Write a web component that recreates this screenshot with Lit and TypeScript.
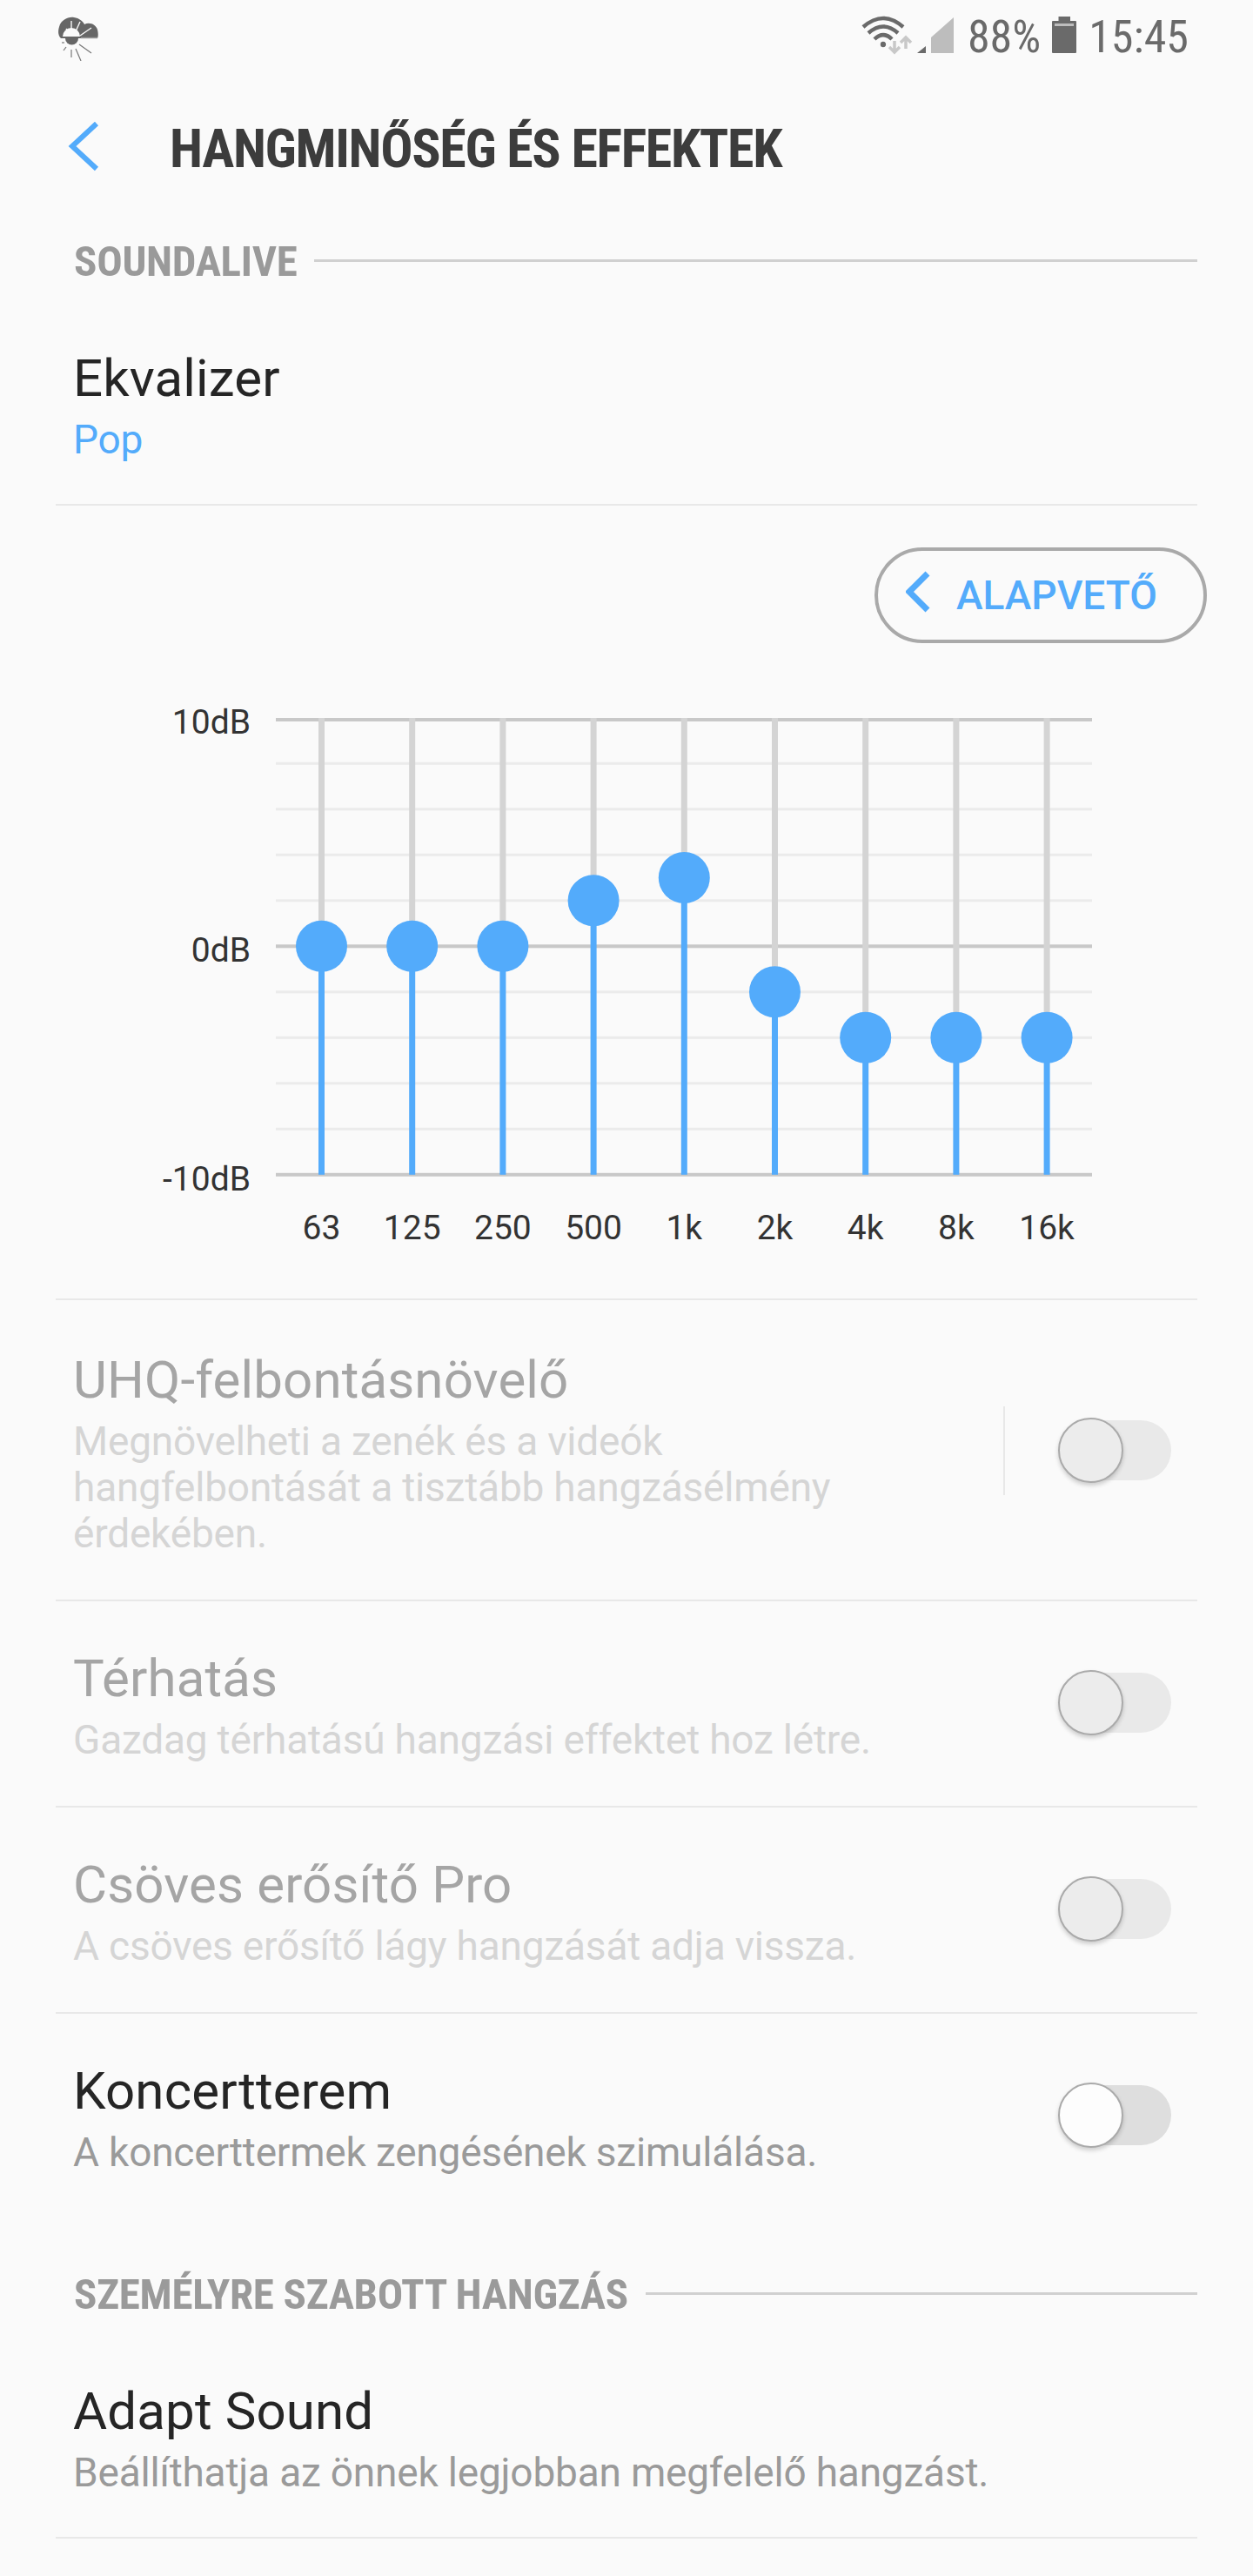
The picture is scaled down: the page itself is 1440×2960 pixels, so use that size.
import { LitElement, html, css, svg } from "lit";
import { customElement } from "lit/decorators.js";

const BARS: [string, number][] = [
  ["63", 0], ["125", 0], ["250", 0], ["500", 1], ["1k", 1.5], ["2k", -1], ["4k", -2], ["8k", -2], ["16k", -2],
];
const TOP = 827, FIRST = 877.3, STEP = 52.5, X0 = 369.5, DX = 104.2;

@customElement("app-root")
export class AppRoot extends LitElement {
  static styles = css`
    :host { display: block; width: 1440px; height: 2960px; background: #fafafa; font-family: Roboto, sans-serif; overflow: hidden; }
    .status { height: 80px; display: flex; align-items: flex-start; color: #6a6a6a; }
    .status .cloud { margin: 10px 0 0 55px; }
    .status .net { margin: 10px 0 0 auto; }
    .status .pct, .status .time { font-size: 52px; line-height: 60px; font-stretch: 80%; }
    .status .pct { margin: 13px 0 0 11px; font-stretch: 82%; }
    .status .batt { margin: 10px 0 0 12px; }
    .status .time { margin: 13px 74px 0 13px; }
    .header { height: 191px; display: flex; align-items: flex-start; }
    .header .back { margin: 60px 0 0 78px; }
    .header h1 { margin: 51px 0 0 0; padding-left: 81px; font-size: 62px; line-height: 80px; font-weight: 700; color: #3c3c3c; font-stretch: 75%; letter-spacing: -1.35px; white-space: nowrap; }
    .section { display: flex; align-items: center; height: 60px; margin: 0 64px 0 85px; gap: 20px; }
    .section span { font-size: 49px; line-height: 60px; font-weight: 700; color: #9a9a9a; font-stretch: 75%; letter-spacing: -0.3px; white-space: nowrap; }
    .section i { flex: 1; height: 3px; background: #d0d0d0; margin-bottom: 4px; }
    .row { display: flex; align-items: center; margin: 0 64px; padding: 59px 0 49px 20px; border-bottom: 2px solid #e8e8e8; }
    .row.first { padding: 74px 0 47px 20px; }
    .row.plain { border-bottom: none; margin-bottom: 58px; }
    .text { flex: 1; min-width: 0; }
    .title { font-size: 60px; line-height: 60px; letter-spacing: 0.15px; color: #252525; margin-bottom: 14px; }
    .sub { font-size: 46px; line-height: 53px; letter-spacing: -0.2px; color: #9a9a9a; }
    .sub.blue { color: #53abfb; }
    .row.off .title { color: #a5a5a5; }
    .row.off .sub { color: #d5d5d5; }
    .vsep { width: 2px; height: 102px; background: #e8e8e8; margin: 0 61px 12px 0; }
    .toggle { position: relative; width: 130px; height: 75px; margin: 0 30px 12px 0; flex: none; }
    .track { position: absolute; left: 3px; right: 0; top: 3px; height: 69px; border-radius: 35px; background: #dedede; }
    .thumb { position: absolute; left: 0; top: 0; width: 75px; height: 75px; box-sizing: border-box; border-radius: 50%; background: #fdfdfd; border: 2px solid #aaaaaa; box-shadow: 0 3px 5px rgba(0,0,0,.18); }
    .row.off .track { background: #e9e9e9; }
    .row.off .thumb { background: #ececec; }
    .pillrow { display: flex; justify-content: flex-end; padding: 48px 53px 0 0; }
    .pill { box-sizing: border-box; width: 382px; height: 110px; border: 4px solid #a9a9a9; border-radius: 55px; display: flex; align-items: center; color: #53abfb; padding-left: 32px; }
    .pill svg { margin-bottom: 6px; }
    .pill b { font-size: 46px; font-weight: 500; line-height: 60px; margin-left: 30px; white-space: nowrap; }
    .chart { display: block; margin-top: 51px; font-family: Roboto, sans-serif; }
    .chart text { font-size: 39px; fill: #333333; }
    .chart .end { text-anchor: end; }
    .chart .mid { text-anchor: middle; }
    .rule { height: 2px; margin: 52px 64px 3px; background: #e8e8e8; }
  `;

  private row(title: unknown, sub: unknown, opts: { off?: boolean; sep?: boolean; plain?: boolean } = {}) {
    const cls = `row ${opts.off ? "off" : ""} ${opts.plain ? "plain" : ""}`;
    return html`<div class=${cls}>
      <div class="text"><div class="title">${title}</div><div class="sub">${sub}</div></div>
      ${opts.sep ? html`<div class="vsep"></div>` : ""}
      <div class="toggle"><div class="track"></div><div class="thumb"></div></div>
    </div>`;
  }

  private chart() {
    const ys = Array.from({ length: 11 }, (_, i) => (i === 0 ? TOP : FIRST + (i - 1) * STEP));
    const bottom = ys[10];
    const mid = ys[5];
    return html`<svg class="chart" width="1440" height="650" viewBox="0 790 1440 650">
      ${ys.map((y, i) => {
        const major = i === 0 || i === 5 || i === 10;
        return svg`<rect x="317" y=${y - (major ? 2 : 1.5)} width="938" height=${major ? 4 : 3} fill=${major ? "#c8c8c8" : "#ebebeb"}></rect>`;
      })}
      <text class="end" x="288" y="843">10dB</text>
      <text class="end" x="288" y="1105">0dB</text>
      <text class="end" x="288" y="1368">-10dB</text>
      ${BARS.map(([label, v], i) => {
        const x = X0 + i * DX;
        const y = mid - v * STEP;
        return svg`
          <rect x=${x - 3.5} y=${TOP - 2} width="7" height=${y - TOP + 2} fill="#d4d4d4"></rect>
          <rect x=${x - 3.5} y=${y} width="7" height=${bottom - y} fill="#53abfb"></rect>
          <circle cx=${x} cy=${y} r="29.5" fill="#53abfb"></circle>
          <text class="mid" x=${x} y="1424">${label}</text>`;
      })}
    </svg>`;
  }

  render() {
    return html`
      <div class="status">
        <svg class="cloud" width="70" height="60" viewBox="55 10 70 60">
          <path d="M70 44 C66 40 67 34 68 31 C70 23 78 19 85 20 C91 21 95 24 97 28 C103 25 110 28 112 34 C113 38 113 42 112 44 Z" fill="#666"></path>
          <path d="M72 42 A10 10 0 0 1 92 42 Z" fill="#fafafa"></path>
          <path d="M75 44 H90 A7.5 7.5 0 0 1 75 44 Z" fill="#666"></path>
          <g stroke="#fafafa" stroke-width="1.4" fill="none">
            <path d="M76 33 L79 37"></path><path d="M82 24 V34"></path><path d="M92 25 L87 36"></path><path d="M105 32 L92 41"></path>
          </g>
          <path d="M93 43.5 H112" stroke="#999" stroke-width="1.5"></path>
          <g stroke="#777" stroke-width="1.2" fill="none">
            <path d="M71 49 L74 49"></path><path d="M76 54 L73 58"></path><path d="M82 57 V66"></path><path d="M87 56 L93 70"></path><path d="M91 51 L105 61"></path>
          </g>
        </svg>
        <svg class="net" width="115" height="60" viewBox="985 10 115 60">
          <g fill="none" stroke="#6a6a6a" stroke-width="4.5">
            <path d="M991 31 Q1014 11 1037 31"></path><path d="M997 38 Q1014 23 1031 38"></path><path d="M1004 45 Q1014 35 1024 45"></path>
          </g>
          <circle cx="1014" cy="51" r="3.2" fill="#6a6a6a"></circle>
          <g fill="none" stroke="#c8c8c8" stroke-width="3.5">
            <path d="M1027 47 V60 M1021 54 L1027 60 L1033 54"></path>
            <path d="M1040 56 V43 M1034 49 L1040 43 L1046 49"></path>
          </g>
          <path d="M1053 61 H1063 V53 Z" fill="#6a6a6a"></path>
          <path d="M1069 61 V43 L1095 20 V61 Z" fill="#bdbdbd"></path>
        </svg>
        <span class="pct">88%</span>
        <svg class="batt" width="30" height="60" viewBox="1208 10 30 60">
          <path d="M1216.5 19 H1230 V24 H1236 Q1237 24 1237 25 V60 Q1237 61 1236 61 H1210 Q1209 61 1209 60 V25 Q1209 24 1210 24 H1216.5 Z" fill="#6a6a6a"></path>
          <rect x="1212" y="27" width="22" height="3" fill="#bdbdbd"></rect>
        </svg>
        <span class="time">15:45</span>
      </div>
      <div class="header">
        <svg class="back" width="36" height="60" viewBox="0 0 36 60">
          <path d="M33 2 L5 28 L33 54" fill="none" stroke="#53abfb" stroke-width="6"></path>
        </svg>
        <h1>HANGMINŐSÉG ÉS EFFEKTEK</h1>
      </div>
      <div class="section"><span>SOUNDALIVE</span><i></i></div>
      <div class="row first">
        <div class="text"><div class="title">Ekvalizer</div><div class="sub blue">Pop</div></div>
      </div>
      <div class="pillrow">
        <div class="pill">
          <svg width="28" height="50" viewBox="0 0 28 50"><path d="M25 3 L4 24 L25 45" fill="none" stroke="#53abfb" stroke-width="7"></path></svg>
          <b>ALAPVETŐ</b>
        </div>
      </div>
      ${this.chart()}
      <div class="rule"></div>
      ${this.row("UHQ-felbontásnövelő", html`Megnövelheti a zenék és a videók<br />hangfelbontását a tisztább hangzásélmény<br />érdekében.`, { off: true, sep: true })}
      ${this.row("Térhatás", "Gazdag térhatású hangzási effektet hoz létre.", { off: true })}
      ${this.row("Csöves erősítő Pro", "A csöves erősítő lágy hangzását adja vissza.", { off: true })}
      ${this.row("Koncertterem", "A koncerttermek zengésének szimulálása.", { plain: true })}
      <div class="section"><span>SZEMÉLYRE SZABOTT HANGZÁS</span><i></i></div>
      <div class="row first">
        <div class="text"><div class="title">Adapt Sound</div><div class="sub">Beállíthatja az önnek legjobban megfelelő hangzást.</div></div>
      </div>
    `;
  }
}
